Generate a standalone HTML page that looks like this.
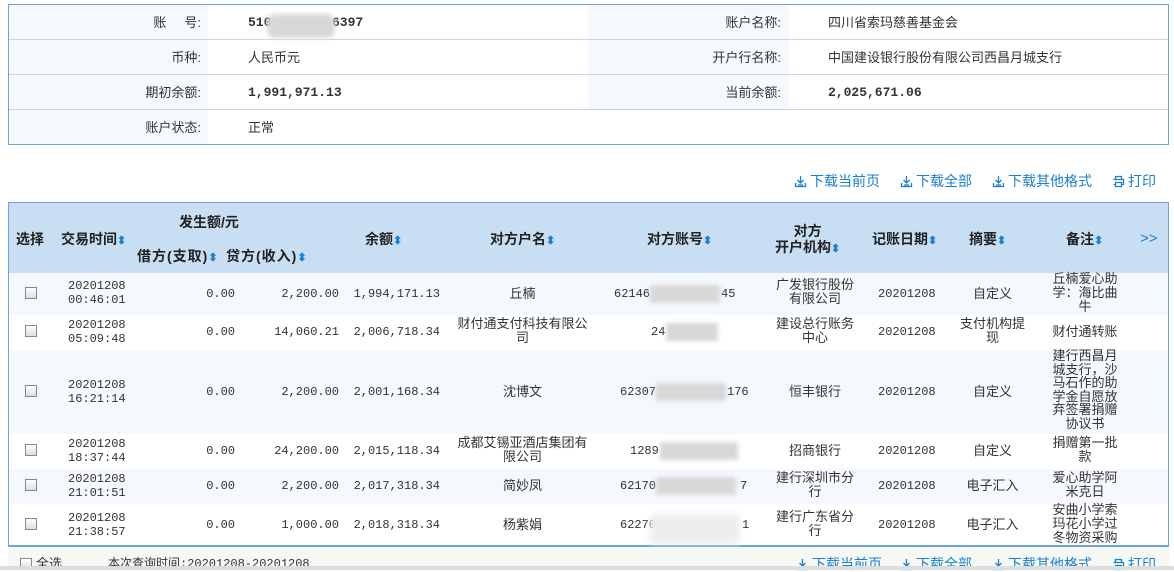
<!DOCTYPE html>
<html><head><meta charset="utf-8"><style>
*{margin:0;padding:0;box-sizing:border-box}
body{width:1174px;height:570px;overflow:hidden;background:#fff;font-family:"Liberation Sans","Noto Sans CJK SC",sans-serif;font-size:13px;line-height:15px;color:#333;position:relative}
.a{position:absolute}
.info{left:8px;top:4px;width:1161px;height:141px;border:1px solid #6aa6dc}
.lab{background:#f5f9fd}
.hl{height:1px;background:#c5d7e8;left:0;width:1159px}
.r{text-align:right}
.c{text-align:center}
.b{font-weight:bold;font-family:"Liberation Mono","Noto Sans CJK SC",monospace}
.tbl{left:8px;top:202px;width:1161px;height:345px;border:1px solid #6aa6dc;border-bottom:2px solid #6aa6dc}
.hdr{left:0;top:0;width:1159px;height:70px;background:#c8dff3}
.th{font-weight:bold;font-size:14px;color:#222;line-height:16px}
.s{color:#1a7fd0;font-size:11px}
.cb{width:12px;height:12px;border:1px solid #888;background:linear-gradient(#fff,#ddd)}
.m{font-family:"Liberation Mono","Noto Sans CJK SC",monospace;font-size:12px}
.blur{background:#d8d8d8;filter:blur(2px)}
.lnk{color:#1a7fd0;font-size:14px;line-height:16px;display:flex;align-items:center;gap:3px}
.lnk svg{width:13px;height:13px}
</style></head><body>
<div class="a info">
 <div class="a lab" style="left:0;top:0;width:199px;height:139px"></div>
 <div class="a lab" style="left:579px;top:0;width:201px;height:104px"></div>
 <div class="a hl" style="top:34px"></div><div class="a hl" style="top:69px"></div><div class="a hl" style="top:104px"></div>
 <div class="a r" style="left:0;width:192px;top:10px">账&nbsp;&nbsp;&nbsp;&nbsp;&nbsp;号:</div>
 <div class="a b" style="left:239px;top:10px">510</div>
 <div class="a b" style="left:323px;top:10px">6397</div>
 <div class="a blur" style="left:258px;top:9px;width:68px;height:24px;border-radius:8px"></div>
 <div class="a r" style="left:0;width:192px;top:45px">币种:</div>
 <div class="a" style="left:239px;top:45px">人民币元</div>
 <div class="a r" style="left:0;width:192px;top:80px">期初余额:</div>
 <div class="a b" style="left:239px;top:80px">1,991,971.13</div>
 <div class="a r" style="left:0;width:192px;top:115px">账户状态:</div>
 <div class="a" style="left:239px;top:115px">正常</div>
 <div class="a r" style="left:579px;width:193px;top:10px">账户名称:</div>
 <div class="a" style="left:819px;top:10px">四川省索玛慈善基金会</div>
 <div class="a r" style="left:579px;width:193px;top:45px">开户行名称:</div>
 <div class="a" style="left:819px;top:45px">中国建设银行股份有限公司西昌月城支行</div>
 <div class="a r" style="left:579px;width:193px;top:80px">当前余额:</div>
 <div class="a b" style="left:819px;top:80px">2,025,671.06</div>
</div>
<svg width="0" height="0" style="position:absolute"><defs>
<symbol id="dl" viewBox="0 0 13 13"><path d="M6.5 1v7M3.5 5l3 3 3-3M1.5 8v3.5h10V8M4 10h5" fill="none" stroke="#1a7fd0" stroke-width="1.3"/></symbol>
<symbol id="pr" viewBox="0 0 13 13"><path d="M3.5 4V1.5h6V4M1.5 4.5h10v5h-2M3.5 9.5h-2M3.5 7.5h6v4h-6z" fill="none" stroke="#1a7fd0" stroke-width="1.3"/></symbol>
</defs></svg>
<div class="a lnk" style="left:794px;top:173px"><svg><use href="#dl"/></svg>下载当前页</div>
<div class="a lnk" style="left:900px;top:173px"><svg><use href="#dl"/></svg>下载全部</div>
<div class="a lnk" style="left:992px;top:173px"><svg><use href="#dl"/></svg>下载其他格式</div>
<div class="a lnk" style="left:1112px;top:173px"><svg><use href="#pr"/></svg>打印</div>

<div class="a tbl">
 <div class="a hdr"></div>
 <div class="a lab" style="left:0;top:70px;width:1159px;height:42px"></div>
 <div class="a lab" style="left:0;top:147px;width:1159px;height:84px"></div>
 <div class="a lab" style="left:0;top:266px;width:1159px;height:35px"></div>
 <div class="a th" style="left:7px;top:28px">选择</div>
 <div class="a th" style="left:52px;top:28px">交易时间<span class="s">⬍</span></div>
 <div class="a th" style="left:170px;top:11px">发生额/元</div>
 <div class="a th" style="left:128px;top:45px;letter-spacing:1px">借方(支取)<span class="s">⬍</span></div>
 <div class="a th" style="left:217px;top:45px;letter-spacing:1px">贷方(收入)<span class="s">⬍</span></div>
 <div class="a th" style="left:356px;top:28px">余额<span class="s">⬍</span></div>
 <div class="a th" style="left:481px;top:28px">对方户名<span class="s">⬍</span></div>
 <div class="a th" style="left:638px;top:28px">对方账号<span class="s">⬍</span></div>
 <div class="a th c" style="left:766px;top:20px">对方<br>开户机构<span class="s">⬍</span></div>
 <div class="a th" style="left:863px;top:28px">记账日期<span class="s">⬍</span></div>
 <div class="a th" style="left:960px;top:28px">摘要<span class="s">⬍</span></div>
 <div class="a th" style="left:1057px;top:28px">备注<span class="s">⬍</span></div>
 <div class="a" style="left:1131px;top:28px;color:#1a7fd0;font-size:15px">&gt;&gt;</div>
</div>
<div class="a m" style="left:0;top:0;width:1174px">
 <div class="a cb" style="left:25px;top:287px"></div>
 <div class="a" style="left:68px;top:279px;line-height:14px">20201208<br>00:46:01</div>
 <div class="a r" style="left:150px;width:85px;top:287px">0.00</div>
 <div class="a r" style="left:240px;width:99px;top:287px">2,200.00</div>
 <div class="a r" style="left:340px;width:100px;top:287px">1,994,171.13</div>
 <div class="a c" style="left:460px;width:125px;top:287px;font-size:13px">丘楠</div>
 <div class="a" style="left:614px;top:287px">62146</div>
 <div class="a" style="left:721px;top:287px">45</div>
 <div class="a blur" style="left:650px;top:285px;width:70px;height:18px"></div>
 <div class="a c" style="left:765px;width:100px;top:279px;line-height:14px;font-size:13px">广发银行股份<br>有限公司</div>
 <div class="a" style="left:878px;top:287px">20201208</div>
 <div class="a c" style="left:960px;width:65px;top:287px;font-size:13px">自定义</div>
 <div class="a c" style="left:1045px;width:80px;top:273px;line-height:14px;font-size:13px">丘楠爱心助<br>学：海比曲<br>牛</div>
 <div class="a cb" style="left:25px;top:325px"></div>
 <div class="a" style="left:68px;top:318px;line-height:14px">20201208<br>05:09:48</div>
 <div class="a r" style="left:150px;width:85px;top:325px">0.00</div>
 <div class="a r" style="left:240px;width:99px;top:325px">14,060.21</div>
 <div class="a r" style="left:340px;width:100px;top:325px">2,006,718.34</div>
 <div class="a c" style="left:450px;width:145px;top:318px;line-height:14px;font-size:13px">财付通支付科技有限公<br>司</div>
 <div class="a" style="left:651px;top:325px">24</div>
 <div class="a blur" style="left:666px;top:323px;width:52px;height:18px"></div>
 <div class="a c" style="left:765px;width:100px;top:318px;line-height:14px;font-size:13px">建设总行账务<br>中心</div>
 <div class="a" style="left:878px;top:325px">20201208</div>
 <div class="a c" style="left:955px;width:75px;top:318px;line-height:14px;font-size:13px">支付机构提<br>现</div>
 <div class="a c" style="left:1045px;width:80px;top:325px;font-size:13px">财付通转账</div>
 <div class="a cb" style="left:25px;top:385px"></div>
 <div class="a" style="left:68px;top:378px;line-height:14px">20201208<br>16:21:14</div>
 <div class="a r" style="left:150px;width:85px;top:385px">0.00</div>
 <div class="a r" style="left:240px;width:99px;top:385px">2,200.00</div>
 <div class="a r" style="left:340px;width:100px;top:385px">2,001,168.34</div>
 <div class="a c" style="left:460px;width:125px;top:385px;font-size:13px">沈博文</div>
 <div class="a" style="left:620px;top:385px">62307</div>
 <div class="a" style="left:727px;top:385px">176</div>
 <div class="a blur" style="left:656px;top:383px;width:70px;height:18px"></div>
 <div class="a c" style="left:765px;width:100px;top:385px;font-size:13px">恒丰银行</div>
 <div class="a" style="left:878px;top:385px">20201208</div>
 <div class="a c" style="left:960px;width:65px;top:385px;font-size:13px">自定义</div>
 <div class="a c" style="left:1045px;width:80px;top:350px;line-height:13.5px;font-size:13px">建行西昌月<br>城支行，沙<br>马石作的助<br>学金自愿放<br>弃签署捐赠<br>协议书</div>
 <div class="a cb" style="left:25px;top:444px"></div>
 <div class="a" style="left:68px;top:437px;line-height:14px">20201208<br>18:37:44</div>
 <div class="a r" style="left:150px;width:85px;top:444px">0.00</div>
 <div class="a r" style="left:240px;width:99px;top:444px">24,200.00</div>
 <div class="a r" style="left:340px;width:100px;top:444px">2,015,118.34</div>
 <div class="a c" style="left:450px;width:145px;top:437px;line-height:14px;font-size:13px">成都艾锡亚酒店集团有<br>限公司</div>
 <div class="a" style="left:630px;top:444px">1289</div>
 <div class="a blur" style="left:660px;top:442px;width:78px;height:18px"></div>
 <div class="a c" style="left:765px;width:100px;top:444px;font-size:13px">招商银行</div>
 <div class="a" style="left:878px;top:444px">20201208</div>
 <div class="a c" style="left:960px;width:65px;top:444px;font-size:13px">自定义</div>
 <div class="a c" style="left:1045px;width:80px;top:437px;line-height:14px;font-size:13px">捐赠第一批<br>款</div>
 <div class="a cb" style="left:25px;top:479px"></div>
 <div class="a" style="left:68px;top:472px;line-height:14px">20201208<br>21:01:51</div>
 <div class="a r" style="left:150px;width:85px;top:479px">0.00</div>
 <div class="a r" style="left:240px;width:99px;top:479px">2,200.00</div>
 <div class="a r" style="left:340px;width:100px;top:479px">2,017,318.34</div>
 <div class="a c" style="left:460px;width:125px;top:479px;font-size:13px">简妙凤</div>
 <div class="a" style="left:620px;top:479px">62170</div>
 <div class="a" style="left:740px;top:479px">7</div>
 <div class="a blur" style="left:656px;top:477px;width:80px;height:18px"></div>
 <div class="a c" style="left:765px;width:100px;top:472px;line-height:14px;font-size:13px">建行深圳市分<br>行</div>
 <div class="a" style="left:878px;top:479px">20201208</div>
 <div class="a c" style="left:960px;width:65px;top:479px;font-size:13px">电子汇入</div>
 <div class="a c" style="left:1045px;width:80px;top:472px;line-height:14px;font-size:13px">爱心助学阿<br>米克日</div>
 <div class="a cb" style="left:25px;top:518px"></div>
 <div class="a" style="left:68px;top:511px;line-height:14px">20201208<br>21:38:57</div>
 <div class="a r" style="left:150px;width:85px;top:518px">0.00</div>
 <div class="a r" style="left:240px;width:99px;top:518px">1,000.00</div>
 <div class="a r" style="left:340px;width:100px;top:518px">2,018,318.34</div>
 <div class="a c" style="left:460px;width:125px;top:518px;font-size:13px">杨紫娟</div>
 <div class="a" style="left:620px;top:518px">62270</div>
 <div class="a" style="left:742px;top:518px">1</div>
 <div class="a" style="left:650px;top:514px;width:90px;height:30px;background:#eee;filter:blur(3px)"></div>
 <div class="a c" style="left:765px;width:100px;top:511px;line-height:14px;font-size:13px">建行广东省分<br>行</div>
 <div class="a" style="left:878px;top:518px">20201208</div>
 <div class="a c" style="left:960px;width:65px;top:518px;font-size:13px">电子汇入</div>
 <div class="a c" style="left:1045px;width:80px;top:504px;line-height:14px;font-size:13px">安曲小学索<br>玛花小学过<br>冬物资采购</div>
</div>
<div class="a" style="left:8px;top:548px;width:1161px;height:22px;background:#f5f8f3"></div>
<div class="a cb" style="left:20px;top:558px"></div>
<div class="a" style="left:36px;top:556px">全选</div>
<div class="a m" style="left:108px;top:557px">本次查询时间:20201208-20201208</div>
<div class="a lnk" style="left:796px;top:556px"><svg><use href="#dl"/></svg>下载当前页</div>
<div class="a lnk" style="left:900px;top:556px"><svg><use href="#dl"/></svg>下载全部</div>
<div class="a lnk" style="left:992px;top:556px"><svg><use href="#dl"/></svg>下载其他格式</div>
<div class="a lnk" style="left:1112px;top:556px"><svg><use href="#pr"/></svg>打印</div>
<div class="a" style="left:0;top:566px;width:1174px;height:4px;background:#ddd"></div>
</body></html>
